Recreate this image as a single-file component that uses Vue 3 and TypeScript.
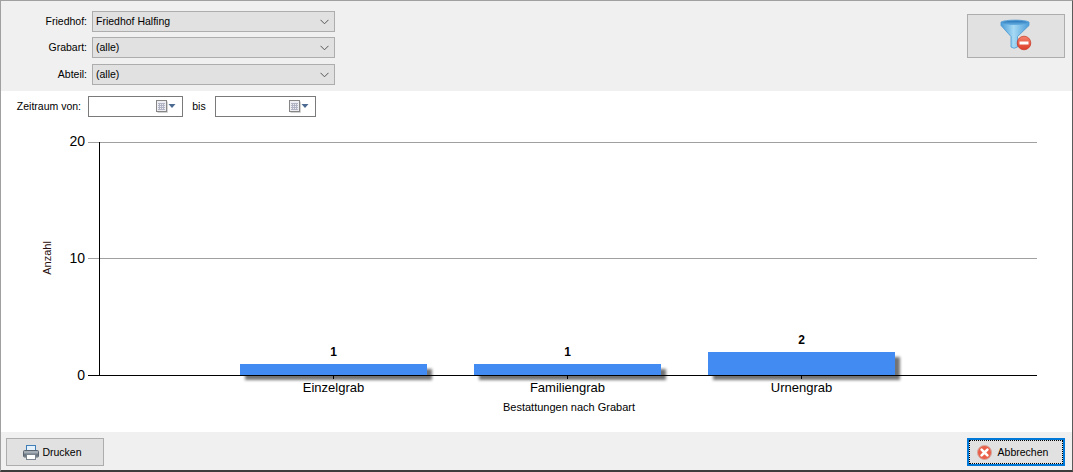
<template>
  <div class="window">
    <div class="filter-panel">
      <div class="filter-rows">
        <div v-for="filter in filters" :key="filter.label" class="filter-row">
          <label class="filter-label">{{ filter.label }}:</label>
          <div class="combo">
            <span>{{ filter.value }}</span>
            <svg class="combo-arrow" width="9" height="6" viewBox="0 0 9 6">
              <path d="M0.5 0.8 L4.5 4.8 L8.5 0.8" fill="none" stroke="#555" stroke-width="1" />
            </svg>
          </div>
        </div>
      </div>
      <button class="filter-btn" type="button">
        <svg width="36" height="36" viewBox="0 0 36 36">
          <defs>
            <linearGradient id="funnelBody" x1="0" y1="0" x2="1" y2="0">
              <stop offset="0" stop-color="#4a9cd8" />
              <stop offset="0.45" stop-color="#a6d9f4" />
              <stop offset="1" stop-color="#4a9cd8" />
            </linearGradient>
            <linearGradient id="funnelRim" x1="0" y1="0" x2="0" y2="1">
              <stop offset="0" stop-color="#2474b8" />
              <stop offset="1" stop-color="#6db4e4" />
            </linearGradient>
            <linearGradient id="badge" x1="0" y1="0" x2="0" y2="1">
              <stop offset="0" stop-color="#f5826c" />
              <stop offset="1" stop-color="#dc3d2a" />
            </linearGradient>
          </defs>
          <path d="M3 4 C7 1.500 27 1.500 31 4 L31 7.500 L19.500 18.500 L19.500 29 Q16 31.500 13 29 L13 18.500 L3 7.500 Z" fill="url(#funnelBody)" stroke="#4a97d2" stroke-width="0.8" />
          <ellipse cx="17" cy="4.800" rx="12.500" ry="2.300" fill="url(#funnelRim)" />
          <circle cx="26" cy="25" r="6.800" fill="url(#badge)" stroke="#c9341f" stroke-width="0.7" />
          <rect x="21.500" y="23.500" width="9" height="3" fill="#fff" />
        </svg>
      </button>
    </div>

    <div class="period-row">
      <span class="period-label">Zeitraum von:</span>
      <div class="date-box from">
        <svg width="20" height="13" viewBox="0 0 20 13">
          <path d="M1.500 12.500H11.500V1.500" fill="none" stroke="#d2d2d2" />
          <rect x="0.500" y="0.500" width="10" height="11" fill="#eeeef2" stroke="#868686" />
          <path d="M2 3.500H9M2 5.500H9M2 7.500H9M2 9.500H9M3.500 3V10M5.500 3V10M7.500 3V10" stroke="#b0b4c4" stroke-width="1" />
          <path d="M12.500 4H19.500L16 8Z" fill="#4c6a92" />
        </svg>
      </div>
      <span class="period-bis">bis</span>
      <div class="date-box to">
        <svg width="20" height="13" viewBox="0 0 20 13">
          <path d="M1.500 12.500H11.500V1.500" fill="none" stroke="#d2d2d2" />
          <rect x="0.500" y="0.500" width="10" height="11" fill="#eeeef2" stroke="#868686" />
          <path d="M2 3.500H9M2 5.500H9M2 7.500H9M2 9.500H9M3.500 3V10M5.500 3V10M7.500 3V10" stroke="#b0b4c4" stroke-width="1" />
          <path d="M12.500 4H19.500L16 8Z" fill="#4c6a92" />
        </svg>
      </div>
    </div>

    <div class="chart-area">
      <svg class="chart" width="1071" height="309" viewBox="0 0 1071 309">
        <defs>
          <filter id="barShadow" x="-5%" y="-30%" width="110%" height="180%">
            <feGaussianBlur stdDeviation="1.500" />
          </filter>
        </defs>
        <g transform="translate(-1 -123)">
          <line v-for="t in ticks" :key="t.label" x1="88" x2="1037" :y1="t.y + 0.500" :y2="t.y + 0.500" stroke="#a0a0a0" />
          <text v-for="t in ticks" :key="'l' + t.label" x="85" :y="t.base" text-anchor="end" class="axis-num">{{ t.label }}</text>

          <g v-for="bar in bars" :key="bar.label">
            <rect :x="bar.x + 5" :y="bar.top + 5" width="187" :height="375 - bar.top" fill="#444" opacity="0.75" filter="url(#barShadow)" />
            <rect :x="bar.x" :y="bar.top" width="187" :height="375 - bar.top" fill="#418bf2" />
            <text :x="bar.x + 93.500" :y="bar.top - 8" text-anchor="middle" class="bar-value">{{ bar.value }}</text>
            <line :x1="bar.x + 93.500" :x2="bar.x + 93.500" y1="375" y2="379" stroke="#000" />
            <text :x="bar.x + 93.500" y="392" text-anchor="middle" class="axis-cat">{{ bar.label }}</text>
          </g>

          <line x1="99.500" x2="99.500" y1="142" y2="376" stroke="#000" />
          <line x1="88" x2="1037" y1="375.500" y2="375.500" stroke="#000" />

          <text x="569" y="411" text-anchor="middle" class="axis-title">Bestattungen nach Grabart</text>
          <text transform="translate(51 258) rotate(-90)" text-anchor="middle" class="axis-title y">Anzahl</text>
        </g>
      </svg>
    </div>

    <div class="footer">
      <button class="btn print" type="button">
        <svg width="16" height="15" viewBox="0 0 16 15">
          <rect x="3.500" y="0.500" width="9" height="6" fill="#e4f0fa" stroke="#3f7eb6" />
          <rect x="0.500" y="5.500" width="15" height="6.500" rx="1" fill="#a4acb5" stroke="#5b6570" />
          <rect x="1" y="8.500" width="14" height="3" fill="#6d7883" />
          <rect x="3.500" y="9.500" width="9" height="5" fill="#fff" stroke="#7a8590" />
        </svg>
        <span>Drucken</span>
      </button>
      <button class="btn cancel" type="button">
        <svg width="15" height="15" viewBox="0 0 15 15">
          <circle cx="7.500" cy="7.500" r="7" fill="#ea5f49" stroke="#d4a89e" />
          <path d="M4.600 4.600L10.400 10.400M10.400 4.600L4.600 10.400" stroke="#fff" stroke-width="2.600" stroke-linecap="round" />
        </svg>
        <span>Abbrechen</span>
      </button>
    </div>
  </div>
</template>

<script setup lang="ts">
type Filter = { label: string; value: string };
type Tick = { label: string; y: number; base: number };
type Bar = { label: string; value: number; x: number; top: number };

const filters: Filter[] = [
  { label: 'Friedhof', value: 'Friedhof Halfing' },
  { label: 'Grabart', value: '(alle)' },
  { label: 'Abteil', value: '(alle)' }
];

const ticks: Tick[] = [
  { label: '20', y: 142, base: 146 },
  { label: '10', y: 258, base: 263 },
  { label: '0', y: 375, base: 380 }
];

const bars: Bar[] = [
  { label: 'Einzelgrab', value: 1, x: 240, top: 364 },
  { label: 'Familiengrab', value: 1, x: 474, top: 364 },
  { label: 'Urnengrab', value: 2, x: 708, top: 352 }
];
</script>

<style>
html,
body {
  margin: 0;
  background: #fff;
  overflow: hidden;
}
</style>

<style scoped>
.window {
  box-sizing: border-box;
  width: 1073px;
  height: 472px;
  display: flex;
  flex-direction: column;
  border: 1px solid #a0a0a0;
  border-bottom: 2px solid #3c3c3c;
  border-right-color: #5a5a5a;
  font-family: "Liberation Sans", Arial, sans-serif;
  font-size: 10.5px;
  color: #000;
  background: #fff;
}

.filter-panel {
  height: 90px;
  display: flex;
  justify-content: space-between;
  background: #f0f0f0;
  padding: 10px 7px 0 0;
  box-sizing: border-box;
}

.filter-rows {
  display: flex;
  flex-direction: column;
  gap: 5px;
}

.filter-row {
  display: flex;
  align-items: center;
  gap: 5px;
}

.filter-row:last-child {
  margin-top: 1px;
}

.filter-label {
  width: 86px;
  text-align: right;
  padding-bottom: 2px;
}

.combo {
  box-sizing: border-box;
  width: 243px;
  height: 21px;
  display: flex;
  align-items: center;
  justify-content: space-between;
  padding: 0 5px 2px 3px;
  background: #e1e1e1;
  border: 1px solid #adadad;
}

.combo-arrow {
  margin-top: 2px;
}

.filter-btn {
  box-sizing: border-box;
  width: 98px;
  height: 44px;
  margin-top: 3px;
  padding: 0;
  display: flex;
  align-items: center;
  justify-content: center;
  background: #e1e1e1;
  border: 1px solid #adadad;
}

.period-row {
  height: 32px;
  box-sizing: border-box;
  padding-top: 5px;
  display: flex;
  align-items: flex-start;
}

.period-label {
  width: 80px;
  text-align: right;
  line-height: 21px;
}

.date-box {
  box-sizing: border-box;
  height: 21px;
  border: 1px solid #7a7a7a;
  background: #fff;
  display: flex;
  align-items: center;
  justify-content: flex-end;
  padding-right: 6px;
}

.date-box.from {
  width: 95px;
  margin-left: 7px;
}

.date-box.to {
  width: 101px;
}

.period-bis {
  width: 32px;
  text-align: center;
  line-height: 21px;
}

.chart-area {
  flex: 1;
  min-height: 0;
}

.chart {
  display: block;
}

.axis-num {
  font-size: 14px;
  fill: #000;
}

.bar-value {
  font-size: 12px;
  font-weight: 700;
  fill: #000;
}

.axis-cat {
  font-size: 13px;
  fill: #000;
}

.axis-title {
  font-size: 11px;
  fill: #000;
}

.axis-title.y {
  fill: #2a1010;
}

.footer {
  height: 38px;
  box-sizing: border-box;
  padding: 6px 7px 0 5px;
  background: #f0f0f0;
  display: flex;
  justify-content: space-between;
  align-items: flex-start;
}

.btn {
  box-sizing: border-box;
  height: 28px;
  display: flex;
  align-items: center;
  justify-content: center;
  gap: 3px;
  padding: 0 5px 0 0;
  font: inherit;
  color: #000;
  background: #e1e1e1;
  border: 1px solid #adadad;
}

.btn.print {
  width: 98px;
}

.btn.cancel {
  width: 98px;
  gap: 6px;
  padding-right: 7px;
  border: 2px solid #0078d7;
  outline: 1px dotted #000;
  outline-offset: -3px;
}
</style>
